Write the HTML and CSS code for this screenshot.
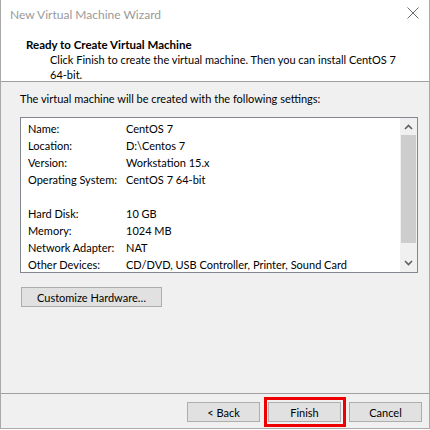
FILE: index.html
```html
<!DOCTYPE html>
<html>
<head>
<meta charset="utf-8">
<link rel="stylesheet" href="styles.css">
</head>
<body>
<div class="window">
  <div class="titlebar">
    <span class="title">New Virtual Machine Wizard</span>
    <svg class="close" width="12" height="12" viewBox="0 0 12 12"><path d="M0.5 0.5 L11.5 11.5 M11.5 0.5 L0.5 11.5" stroke="#6b6b6b" stroke-width="1" fill="none"/></svg>
  </div>
  <div class="header">
    <div class="h-title">Ready to Create Virtual Machine</div>
    <div class="h-sub">Click Finish to create the virtual machine. Then you can install CentOS 7 64-bit.</div>
  </div>
  <div class="content">
    <div class="intro">The virtual machine will be created with the following settings:</div>
    <div class="listbox">
      <div class="rows">
        <div class="row"><span class="lbl">Name:</span><span>CentOS 7</span></div>
        <div class="row"><span class="lbl">Location:</span><span>D:\Centos 7</span></div>
        <div class="row"><span class="lbl">Version:</span><span>Workstation 15.x</span></div>
        <div class="row"><span class="lbl">Operating System:</span><span>CentOS 7 64-bit</span></div>
        <div class="row"></div>
        <div class="row"><span class="lbl">Hard Disk:</span><span>10 GB</span></div>
        <div class="row"><span class="lbl">Memory:</span><span>1024 MB</span></div>
        <div class="row"><span class="lbl">Network Adapter:</span><span>NAT</span></div>
        <div class="row"><span class="lbl">Other Devices:</span><span>CD/DVD, USB Controller, Printer, Sound Card</span></div>
      </div>
      <div class="scrollbar">
        <svg class="arrow" width="9" height="6" viewBox="0 0 9 6"><path d="M1 5 L4.5 1.5 L8 5" stroke="#606060" stroke-width="1.6" fill="none"/></svg>
        <div class="track"><div class="thumb"></div></div>
        <svg class="arrow" width="9" height="6" viewBox="0 0 9 6"><path d="M1 1 L4.5 4.5 L8 1" stroke="#606060" stroke-width="1.6" fill="none"/></svg>
      </div>
    </div>
    <button class="btn custom">Customize Hardware…</button>
  </div>
  <div class="footer">
    <button class="btn">&lt; Back</button>
    <button class="btn finish">Finish</button>
    <button class="btn">Cancel</button>
  </div>
</div>
</body>
</html>
```

FILE: styles.css
```css
html, body {
  margin: 0;
  padding: 0;
  background: #ffffff;
}
body {
  font-family: Lato, "Noto Sans", sans-serif;
  font-size: 11px;
  color: #000;
}
.window {
  width: 428px;
  height: 428px;
  border-left: 1px solid #a9a9a9;
  border-right: 1px solid #a9a9a9;
  border-bottom: 1px solid #a9a9a9;
  display: flex;
  flex-direction: column;
  background: #f0f0f0;
}
.titlebar {
  height: 30px;
  background: #fff;
  display: flex;
  align-items: center;
  justify-content: space-between;
  padding: 0 10px 0 9px;
}
.title {
  color: #9a9a9a;
  font-size: 12px;
  margin-top: -1px;
}
.close {
  margin-top: -4px;
}
.header {
  background: #fff;
  height: 44px;
  padding-top: 7px;
  border-bottom: 1px solid #a0a0a0;
  line-height: 15px;
}
.h-title {
  font-weight: bold;
  font-size: 11.5px;
  padding-left: 25px;
}
.h-sub {
  margin-left: 49px;
  width: 360px;
}
.content {
  flex: 1;
  padding: 9px 10px 0 19px;
  border-bottom: 1px solid #a0a0a0;
  display: flex;
  flex-direction: column;
  align-items: flex-start;
}
.intro {
  line-height: 15px;
}
.listbox {
  margin-top: 11px;
  width: 396px;
  height: 154px;
  border: 1px solid #828790;
  background: #fff;
  display: flex;
}
.rows {
  flex: 1;
  padding: 2px 0 0 7px;
}
.row {
  height: 17px;
  line-height: 17px;
  display: flex;
  white-space: nowrap;
}
.lbl {
  width: 98px;
  flex: none;
}
.scrollbar {
  width: 17px;
  background: #f0f0f0;
  display: flex;
  flex-direction: column;
  align-items: center;
  padding: 6px 0 6px;
  box-sizing: border-box;
}
.arrow {
  flex: none;
}
.track {
  flex: 1;
  width: 100%;
  padding: 5px 1px 17px;
  box-sizing: border-box;
}
.thumb {
  height: 100%;
  background: #cdcdcd;
}
.btn {
  font-family: inherit;
  font-size: 11px;
  color: #000;
  background: #e1e1e1;
  border: 1px solid #adadad;
  height: 20px;
  padding: 0;
  margin: 0;
  line-height: 17px;
}
.custom {
  margin-top: 14px;
  margin-left: 1px;
  width: 141px;
}
.footer {
  height: 34px;
  display: flex;
  justify-content: flex-end;
  align-items: flex-start;
  gap: 8px;
  padding: 8px 7px 0 0;
  box-sizing: border-box;
}
.footer .btn {
  width: 73px;
}
.finish {
  position: relative;
}
.finish::after {
  content: "";
  position: absolute;
  top: -6px;
  left: -5px;
  right: -6px;
  bottom: -6px;
  border: 3px solid #ee0000;
}
```
